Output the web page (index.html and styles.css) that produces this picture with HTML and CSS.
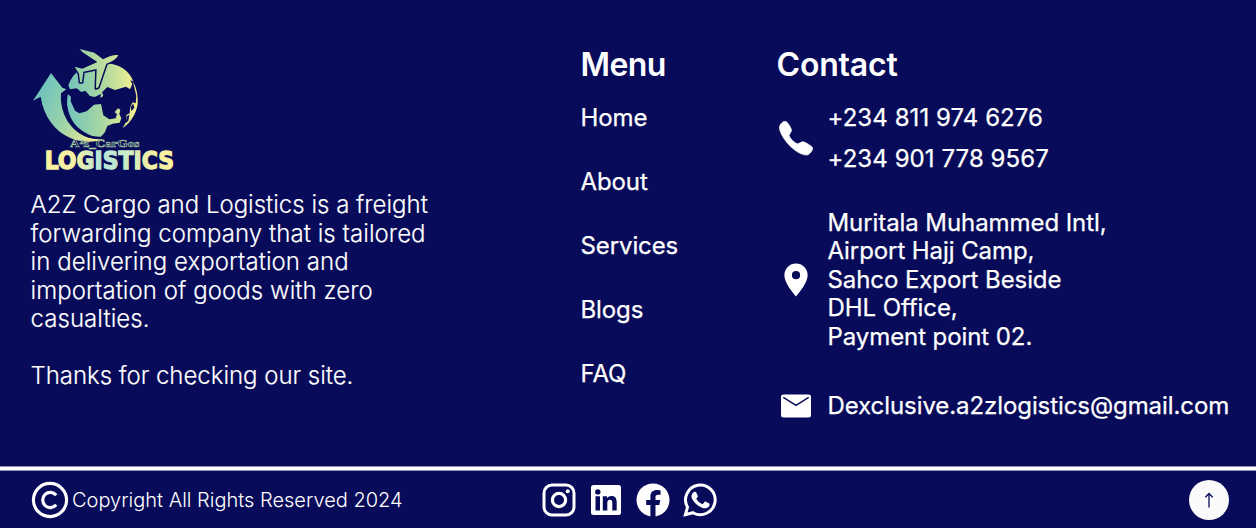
FILE: index.html
```html
<!DOCTYPE html>
<html lang="en">
<head>
<meta charset="utf-8">
<title>A2Z Cargo and Logistics</title>
<link rel="stylesheet" href="styles.css">
</head>
<body>
<footer class="footer">
  <div class="columns">
    <section class="about">
      <svg class="logo" viewBox="33 0 477 435" role="img" aria-label="A2Z Cargos Logistics">
        <defs>
          <linearGradient id="globe" gradientUnits="userSpaceOnUse" x1="140" y1="0" x2="355" y2="0">
            <stop offset="0" stop-color="#72c4bc"/><stop offset=".45" stop-color="#a2d5a3"/><stop offset="1" stop-color="#fbf28c"/>
          </linearGradient>
          <linearGradient id="sweep" gradientUnits="userSpaceOnUse" x1="40" y1="200" x2="240" y2="290">
            <stop offset="0" stop-color="#6cc2bd"/><stop offset=".45" stop-color="#98d2ac"/><stop offset="1" stop-color="#f4ee90"/>
          </linearGradient>
          <linearGradient id="plane" gradientUnits="userSpaceOnUse" x1="165" y1="0" x2="295" y2="0">
            <stop offset="0" stop-color="#8fd0aa"/><stop offset="1" stop-color="#d3e596"/>
          </linearGradient>
          <linearGradient id="word" gradientUnits="userSpaceOnUse" x1="76" y1="0" x2="460" y2="0">
            <stop offset="0" stop-color="#fdf3a0"/><stop offset=".25" stop-color="#f4f0a6"/><stop offset=".43" stop-color="#b5e6da"/><stop offset=".62" stop-color="#c9ebc8"/><stop offset=".85" stop-color="#f6f0a0"/><stop offset="1" stop-color="#fdf3a0"/>
          </linearGradient>
        </defs>
        <path fill="url(#globe)" d="M145 148C160 104 198 82 248 81C294 80 330 104 340 137L331 132L337 145L330 160L318 152L285 162L262 153L246 169L250 180L241 186L243 174L224 183L210 180L196 164L184 168L170 157L150 160Z"/>
        <path fill="url(#globe)" d="M144 174L153 183L152 196L165 224L178 232L200 226L222 206L243 204L250 238L268 250L287 247L291 235L284 228L294 217L301 221L298 235L304 246L299 260L278 263L262 270L255 288L248 296L238 307C200 298 165 274 149 242C141 220 139 195 144 174Z"/>
        <path fill="url(#globe)" d="M339 137C349 153 355 180 353 205C348 235 331 262 308 276L318 258L319 237L329 232L331 212L338 199L347 202L349 180Z"/>
        <path fill="#080b59" d="M332 212L340 203L343 216L334 225ZM320 241L328 236L325 255L317 261Z"/>
        <path fill="url(#sweep)" d="M93 111L127 155L139 160L123 172C120 213 134 261 178 292C201 307 228 312 254 309C224 320 185 321 151 306C103 285 71 240 62 182L39 194Z"/>
        <path fill="none" stroke="#080b59" stroke-width="8" d="M133 168C134 221 151 272 193 295C211 305 227 306 242 306"/>
        <path fill="url(#plane)" stroke="#080b59" stroke-width="9" paint-order="stroke" stroke-linejoin="round" d="M179 39L223 50L249 70C263 62 282 55 295 57C289 70 275 77 259 83L235 154L228 157L230 99L190 107L186 139L180 139L177 113L164 92L187 98L232 78L187 48Z"/>
        <text class="logo-script" x="150" y="334" textLength="208" lengthAdjust="spacingAndGlyphs">A²z_CarGos</text>
        <text class="logo-word" x="74" y="400" textLength="388" lengthAdjust="spacingAndGlyphs">LOGISTICS</text>
      </svg>
      <p class="blurb"><span class="l1">A2Z Cargo and Logistics is a freight</span><br>forwarding company that is tailored<br>in delivering exportation and<br>importation of goods with zero<br>casualties.</p>
      <p class="blurb thanks">Thanks for checking our site.</p>
    </section>
    <nav class="menu">
      <h2 class="heading">Menu</h2>
      <ul class="links">
        <li>Home</li><li>About</li><li>Services</li><li>Blogs</li><li>FAQ</li>
      </ul>
    </nav>
    <section class="contact">
      <h2 class="heading contact-heading">Contact</h2>
      <div class="entry phones">
        <svg class="icon" viewBox="0 1.5 38 38"><path fill="#fff" d="M3.2 7.5C4.5 5 7.3 3.2 9.2 4.2C11 5.2 13 9 14.3 11.7C15.2 13.8 12.3 16 12 18.3C13.6 21.6 16.9 24.9 20.3 26.4C22.6 26.1 24.6 23.7 26.8 24.4C29.6 25.4 33.8 28.1 35.4 30C36.2 31.6 34 35.4 31.4 37C28.6 38.4 23.2 36.1 20.4 34.3C13.6 30 6.6 22.2 3.6 14.7C2.6 12.1 2 9.7 3.2 7.5Z" stroke="#fff" stroke-width=".8"/></svg>
        <div class="phone-list"><span>+234 811 974 6276</span><span>+234 901 778 9567</span></div>
      </div>
      <div class="entry address">
        <svg class="icon" viewBox="0 0 38 38"><path fill="#fff" fill-rule="evenodd" d="M19 2.6A11.5 11.5 0 0 0 7.4 14.2C7.4 22.8 19 35.4 19 35.4S30.6 22.8 30.6 14.2A11.5 11.5 0 0 0 19 2.6ZM19 18.3A4.1 4.1 0 1 1 19 10.1A4.1 4.1 0 0 1 19 18.3Z"/></svg>
        <p class="lines">Muritala Muhammed Intl,<br>Airport Hajj Camp,<br>Sahco Export Beside<br>DHL Office,<br>Payment point 02.</p>
      </div>
      <div class="entry email">
        <svg class="icon" viewBox="0 0 38 38"><rect x="4" y="7.5" width="30" height="23" rx="2.5" fill="#fff"/><path d="M6.3 10.3L19 18.3L31.7 10.3" fill="none" stroke="#080b59" stroke-width="1.5"/></svg>
        <span>Dexclusive.a2zlogistics@gmail.com</span>
      </div>
    </section>
  </div>
  <div class="rule"></div>
  <div class="bottom">
    <div class="copyright">
      <svg class="copy-icon" viewBox="0 0 38 38"><circle cx="19" cy="19" r="16.6" fill="none" stroke="#fff" stroke-width="3.2"/><path d="M25.2 14.2A7.6 7.6 0 1 0 25.2 23.8" fill="none" stroke="#fff" stroke-width="3.2"/></svg>
      <span>Copyright All Rights Reserved 2024</span>
    </div>
    <div class="social">
      <svg viewBox="0 0 34 34"><rect x="2" y="2" width="30" height="30" rx="8" fill="none" stroke="#fff" stroke-width="3"/><circle cx="17" cy="17" r="6.6" fill="none" stroke="#fff" stroke-width="3.2"/><circle cx="25.7" cy="8.3" r="2" fill="#fff"/></svg>
      <svg viewBox="0 0 34 34"><rect x="2" y="2" width="30" height="30" rx="2.5" fill="#fff"/><circle cx="8.8" cy="8.9" r="2.7" fill="#080b59"/><path fill="#080b59" d="M6.5 13.3H11V27.5H6.5ZM13.8 13.3H18V15.3C19 13.7 20.7 12.9 22.5 12.9C26.5 12.9 27.7 15.6 27.7 19.4V27.5H23.3V20.1C23.3 18.2 22.9 16.8 21 16.8C19 16.8 18.3 18.3 18.3 20.1V27.5H13.8Z"/></svg>
      <svg viewBox="0 0 34 34"><circle cx="17" cy="17" r="16.5" fill="#fff"/><path fill="#080b59" d="M14.4 34V22H10.2V17.1H14.4V13.6C14.4 9.2 17 7.1 20.9 7.1C22.4 7.1 24 7.4 24.6 7.5V11.7H22.1C20 11.7 19.5 12.8 19.5 14V17.1H24.2L23.4 22H19.5V34Z"/></svg>
      <svg viewBox="0 0 34 34"><path fill="none" stroke="#fff" stroke-width="3" d="M2.4 31.7L4.5 24.2A14.8 14.8 0 1 1 10 29.7Z"/><path fill="#fff" d="M11.2 8.9C12.2 8.6 13 8.8 13.4 9.7L14.8 13C15.1 13.9 13.8 14.9 13.2 15.7C14.8 18.5 16.8 20 19.6 21.2L21.5 18.9C21.9 18.4 22.3 18.4 22.9 18.7L26 20.2C26.7 20.5 26.7 21.3 26.4 22.4C25.8 24.5 23.1 25.6 21 25.2C15.5 24.1 11.1 20 9 15.5C7.9 13.1 8.8 9.8 11.2 8.9Z"/></svg>
    </div>
    <a class="to-top" href="#" aria-label="Back to top"><svg viewBox="0 0 40 40"><path d="M20 27.5V13.5M16.3 17.2L20 13.5L23.7 17.2" fill="none" stroke="#080b59" stroke-width="1.3"/></svg></a>
  </div>
</footer>
</body>
</html>
```
FILE: styles.css
```css
* { box-sizing: border-box; margin: 0; padding: 0; }
body { background: #fff; font-family: Inter, "Liberation Sans", sans-serif; color: #fff; overflow: hidden; }
.footer { width: 1256px; height: 528px; background: #080b59; display: flex; flex-direction: column; }
.columns { height: 466px; display: grid; grid-template-columns: 549.5px 196px 1fr; padding-left: 31px; flex: none; }
.about { padding-top: 36px; }
.logo { display: block; width: 159px; height: 145px; overflow: visible; }
.logo-script { font: 700 30px "Liberation Serif", serif; fill: #080b59; stroke: #a9cfa5; stroke-width: 1.6px; }
.logo-word { font: 700 74px "DejaVu Sans", sans-serif; fill: url(#word); stroke: url(#word); stroke-width: 4px; }
.blurb { margin-top: 10px; margin-left: -.5px; font-size: 24px; font-weight: 300; line-height: 28.6px; letter-spacing: .06px; white-space: nowrap; -webkit-text-stroke: .15px #fff; }
.l1 { letter-spacing: 0; }
.thanks { margin-top: 28.5px; letter-spacing: -.03px; }
.heading { font-size: 32px; font-weight: 600; line-height: 38px; letter-spacing: -.6px; padding-top: 46px; height: 84px; }
.contact-heading { letter-spacing: -.2px; }
.links { list-style: none; margin-top: 19px; display: grid; gap: 35px; font-size: 24px; font-weight: 400; line-height: 29px; letter-spacing: -.1px; -webkit-text-stroke: .25px #fff; }
.contact { font-size: 24px; font-weight: 400; white-space: nowrap; }
.entry { display: flex; align-items: center; gap: 13px; -webkit-text-stroke: .25px #fff; letter-spacing: -.08px; }
.icon { width: 38px; height: 38px; flex: none; }
.phones { margin-top: 19px; letter-spacing: .07px; }
.phone-list { display: grid; gap: 12px; line-height: 29px; }
.address { margin-top: 35.5px; line-height: 28.6px; }
.email { margin-top: 35.5px; }
.rule { flex: none; height: 5px; background: #fff; border: solid #8f90b6; border-width: 1px 0; }
.bottom { flex: 1; display: grid; grid-template-columns: 511px 1fr auto; align-items: center; padding: 1px 27px 0 31px; }
.copyright { display: flex; align-items: center; gap: 3px; font-size: 20px; font-weight: 300; white-space: nowrap; }
.copy-icon { width: 38px; height: 38px; }
.social { display: flex; gap: 13px; }
.social svg { width: 34px; height: 34px; }
.to-top { width: 40px; height: 40px; border-radius: 50%; background: #fafafa; }
.to-top svg { display: block; width: 40px; height: 40px; }
```
